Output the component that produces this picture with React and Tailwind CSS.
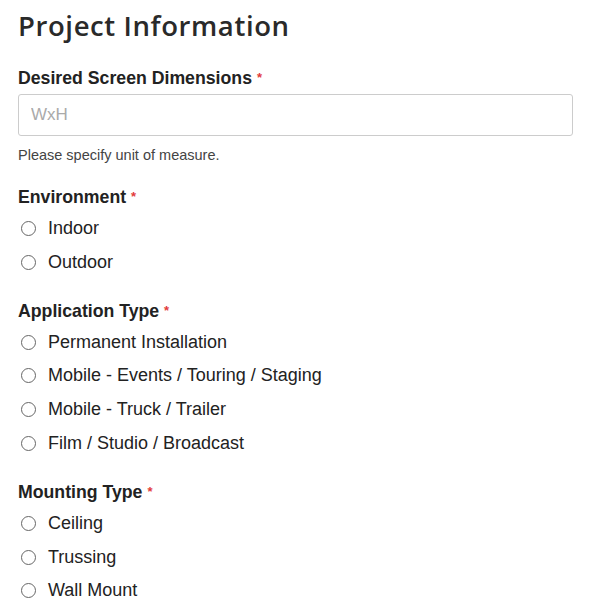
import { useState } from "react";

const groups = [
  { name: "environment", label: "Environment", options: ["Indoor", "Outdoor"] },
  {
    name: "application",
    label: "Application Type",
    options: [
      "Permanent Installation",
      "Mobile - Events / Touring / Staging",
      "Mobile - Truck / Trailer",
      "Film / Studio / Broadcast",
    ],
  },
  { name: "mounting", label: "Mounting Type", options: ["Ceiling", "Trussing", "Wall Mount"] },
];

function Label({ children, className = "" }) {
  return (
    <label className={`block text-[17.7px] leading-6 font-bold text-[#222] ${className}`}>
      {children} <span className="text-[#e23b3b] text-[13px] align-top">*</span>
    </label>
  );
}

function RadioGroup({ name, label, options, value, onChange }) {
  return (
    <fieldset className="mt-[20px]">
      <Label>{label}</Label>
      <div className="mt-[2.5px] flex flex-col">
        {options.map((opt) => (
          <label key={opt} className="flex h-[33.7px] items-center cursor-pointer">
            <input
              type="radio"
              name={name}
              checked={value === opt}
              onChange={() => onChange(opt)}
              className="ml-[3px] h-[15px] w-[15px] appearance-none rounded-full border border-[#666] bg-white checked:border-[4px] checked:border-[#333]"
            />
            <span className="ml-[12px] text-[18px] text-[#222]">{opt}</span>
          </label>
        ))}
      </div>
    </fieldset>
  );
}

export default function App() {
  const [values, setValues] = useState({});
  const [dims, setDims] = useState("");

  return (
    <div className="min-h-screen bg-white px-[18px] pt-[9px] font-['Liberation_Sans',Arial,sans-serif]">
      <div className="w-[555px]">
        <h1 className="text-[27.5px] leading-[34px] font-semibold text-[#2a2a2a] font-['Open_Sans',sans-serif] tracking-[0.6px]">
          Project Information
        </h1>

        <Label className="mt-[23px]">Desired Screen Dimensions</Label>
        <input
          value={dims}
          onChange={(e) => setDims(e.target.value)}
          placeholder="WxH"
          className="mt-[4px] block h-[42px] w-full rounded-[3px] border border-[#ccc] px-[12px] text-[17px] text-[#222] placeholder:text-[#aaa] outline-none"
        />
        <p className="mt-[9px] text-[14.5px] leading-5 text-[#444]">Please specify unit of measure.</p>

        <div className="mt-[4px]">
          {groups.map((g) => (
            <RadioGroup
              key={g.name}
              {...g}
              value={values[g.name]}
              onChange={(v) => setValues((s) => ({ ...s, [g.name]: v }))}
            />
          ))}
        </div>
      </div>
    </div>
  );
}
